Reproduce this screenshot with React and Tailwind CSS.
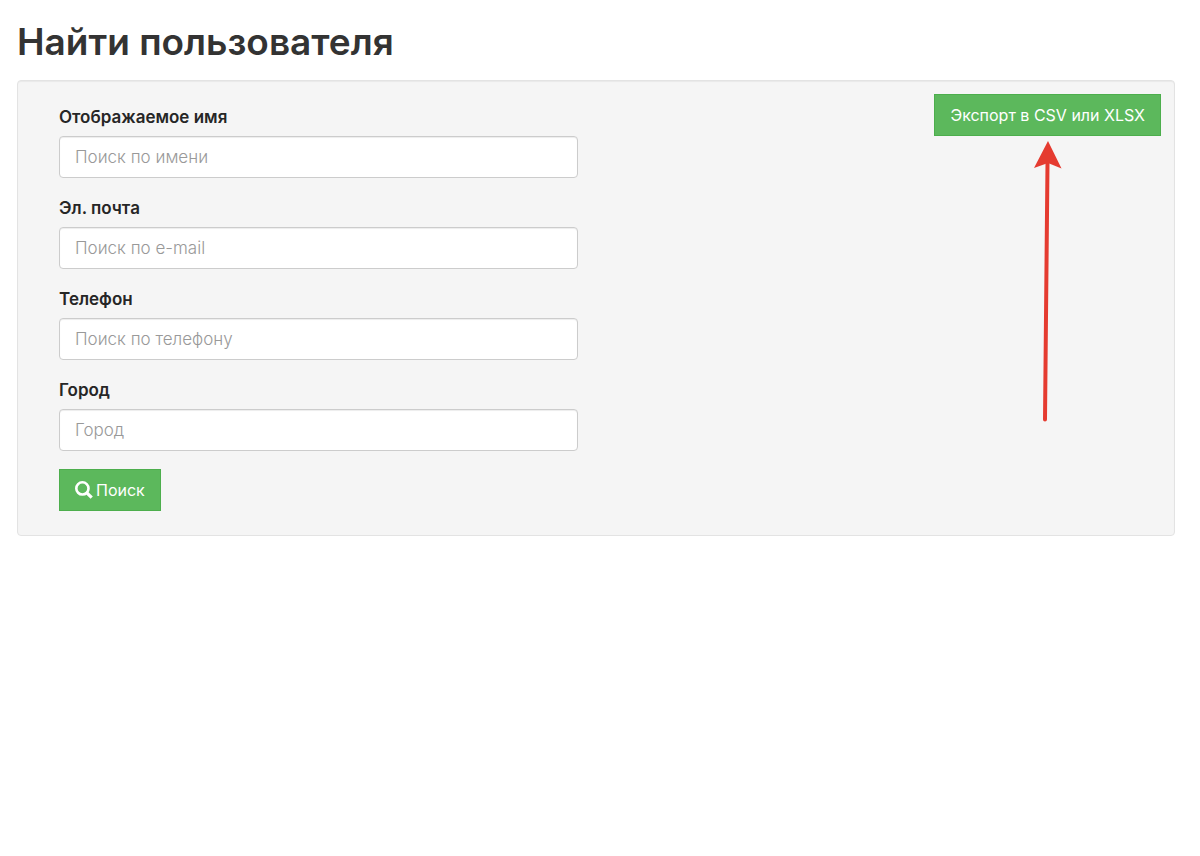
const fields = [
  { id: "name", label: "Отображаемое имя", placeholder: "Поиск по имени", type: "text" },
  { id: "email", label: "Эл. почта", placeholder: "Поиск по e-mail", type: "text" },
  { id: "phone", label: "Телефон", placeholder: "Поиск по телефону", type: "tel" },
  { id: "city", label: "Город", placeholder: "Город", type: "text" },
];

function Field({ id, label, placeholder, type }) {
  return (
    <div className="flex flex-col gap-[7px]">
      <label htmlFor={id} className="text-[17px] leading-6 font-semibold">
        {label}
      </label>
      <input
        id={id}
        type={type}
        placeholder={placeholder}
        className="h-[42px] w-full rounded border border-[#cccccc] bg-white px-[15px] text-[17px] font-light shadow-[inset_0_1px_1px_rgba(0,0,0,0.075)] placeholder:text-[#999999]"
      />
    </div>
  );
}

function SearchIcon() {
  return (
    <svg viewBox="0 0 18 18" className="size-[18px]" fill="none" stroke="currentColor" aria-hidden="true">
      <circle cx="7.4" cy="7.4" r="6.1" strokeWidth="2.6" />
      <path d="M11.600 11.600L16.700 16.700" strokeWidth="3.2" strokeLinecap="butt" />
    </svg>
  );
}

function Arrow() {
  return (
    <svg
      viewBox="0 0 30 282"
      className="pointer-events-none absolute top-[47px] left-1/2 h-[282px] w-[30px] -translate-x-1/2"
      aria-hidden="true"
    >
      <path d="M14.500 22L12 278.500" stroke="#e53b30" strokeWidth="4" strokeLinecap="round" />
      <path d="M15 0L28.500 27.500L15 22L1 27Z" fill="#e53b30" />
    </svg>
  );
}

export default function App() {
  return (
    <main className="px-[17px] pt-[18px] pr-[25px] font-['Inter','Noto_Sans',sans-serif] text-[#262626]">
      <h1 className="text-[37px] leading-12 font-semibold text-[#333333]">Найти пользователя</h1>
      <section className="mt-[14px] grid grid-cols-2 rounded border border-[#e3e3e3] bg-[#f5f5f5] p-[13px] pb-6 shadow-[inset_0_1px_1px_rgba(0,0,0,0.05)]">
        <form className="flex flex-col gap-[18px] pt-[11px] pr-[18px] pl-7" onSubmit={(e) => e.preventDefault()}>
          {fields.map((field) => (
            <Field key={field.id} {...field} />
          ))}
          <button
            type="submit"
            className="flex h-[42px] items-center gap-[3px] self-start border border-[#4cae4c] bg-[#5cb85c] px-[15px] text-[16px] text-white"
          >
            <SearchIcon />
            Поиск
          </button>
        </form>
        <div className="relative self-start justify-self-end">
          <button
            type="button"
            className="h-[42px] border border-[#4cae4c] bg-[#5cb85c] px-[15px] text-[16px] text-white"
          >
            Экспорт в CSV или XLSX
          </button>
          <Arrow />
        </div>
      </section>
    </main>
  );
}
